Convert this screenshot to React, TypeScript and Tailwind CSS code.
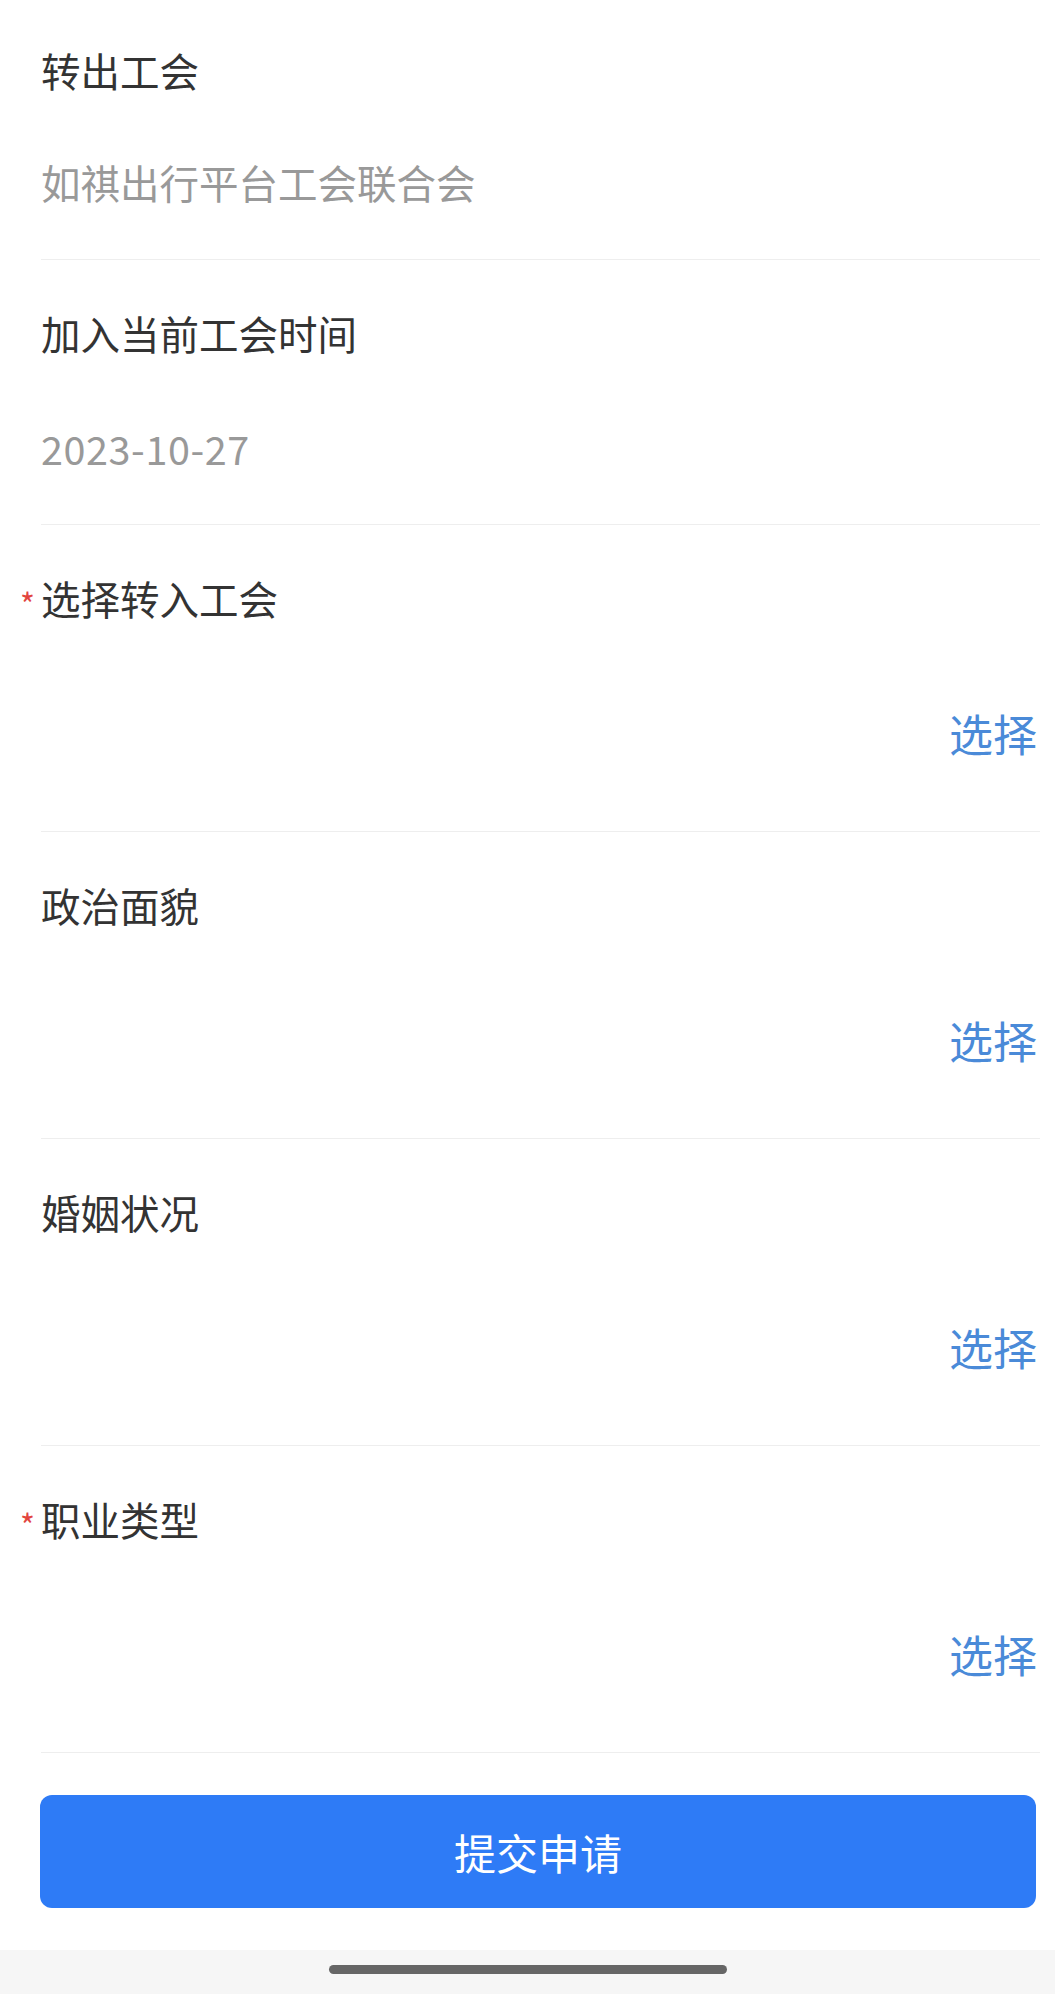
import React from 'react';

const font = { fontFamily: '"Noto Sans CJK SC", "Noto Sans", sans-serif' };

type InfoRow = { label: string; value: string; first?: boolean; digits?: boolean };
type PickRow = { label: string; required?: boolean };

const infoRows: InfoRow[] = [
  { label: '转出工会', value: '如祺出行平台工会联合会', first: true },
  { label: '加入当前工会时间', value: '2023-10-27', digits: true },
];

const pickRows: PickRow[] = [
  { label: '选择转入工会', required: true },
  { label: '政治面貌' },
  { label: '婚姻状况' },
  { label: '职业类型', required: true },
];

const Label: React.FC<{ text: string; required?: boolean }> = ({ text, required }) => (
  <div className="relative text-[39.5px] leading-[38px] text-[#333333]">
    {required && (
      <span className="absolute left-[-21px] top-[8px] text-[32px] leading-[32px] text-[#e2453f]">*</span>
    )}
    {text}
  </div>
);

const App: React.FC = () => {
  return (
    <div className="flex min-h-[1994px] w-[1055px] flex-col bg-white" style={font}>
      <div className="flex flex-1 flex-col pl-[41px] pr-[15px]">
        {/* Read-only info */}
        {infoRows.map((row) => (
          <div
            key={row.label}
            className={`border-b border-[#eeeeee] ${row.first ? 'pt-[51px] pb-[58px]' : 'pt-[54px] pb-[57px]'}`}
          >
            <Label text={row.label} />
            <div
              className={`text-[39.5px] leading-[38px] text-[#999999] ${row.first ? 'mt-[74px]' : 'mt-[77px]'} ${row.digits ? 'tracking-[0.6px]' : ''}`}
            >
              {row.value}
            </div>
          </div>
        ))}

        {/* Pickers */}
        {pickRows.map((row) => (
          <div key={row.label} className="border-b border-[#eeeeee] pt-[54px] pb-[76px]">
            <Label text={row.label} required={row.required} />
            <div className="mt-[94px] flex justify-end pr-[3px]">
              <button className="text-[44px] leading-[44px] text-[#4a8ad8]">选择</button>
            </div>
          </div>
        ))}

        <div className="mt-[42px] mr-[3px]">
          <button className="ml-[-1px] flex h-[113px] w-full items-center justify-center rounded-[12px] bg-[#2e7bf6] text-[42px] text-white">
            提交申请
          </button>
        </div>
        <div className="flex-1" />
      </div>

      {/* Home indicator */}
      <div className="flex h-[44px] items-start justify-center bg-[#f6f6f6] pt-[15px]">
        <div className="h-[9px] w-[398px] rounded-full bg-[#666666]" />
      </div>
    </div>
  );
};

export default App;
